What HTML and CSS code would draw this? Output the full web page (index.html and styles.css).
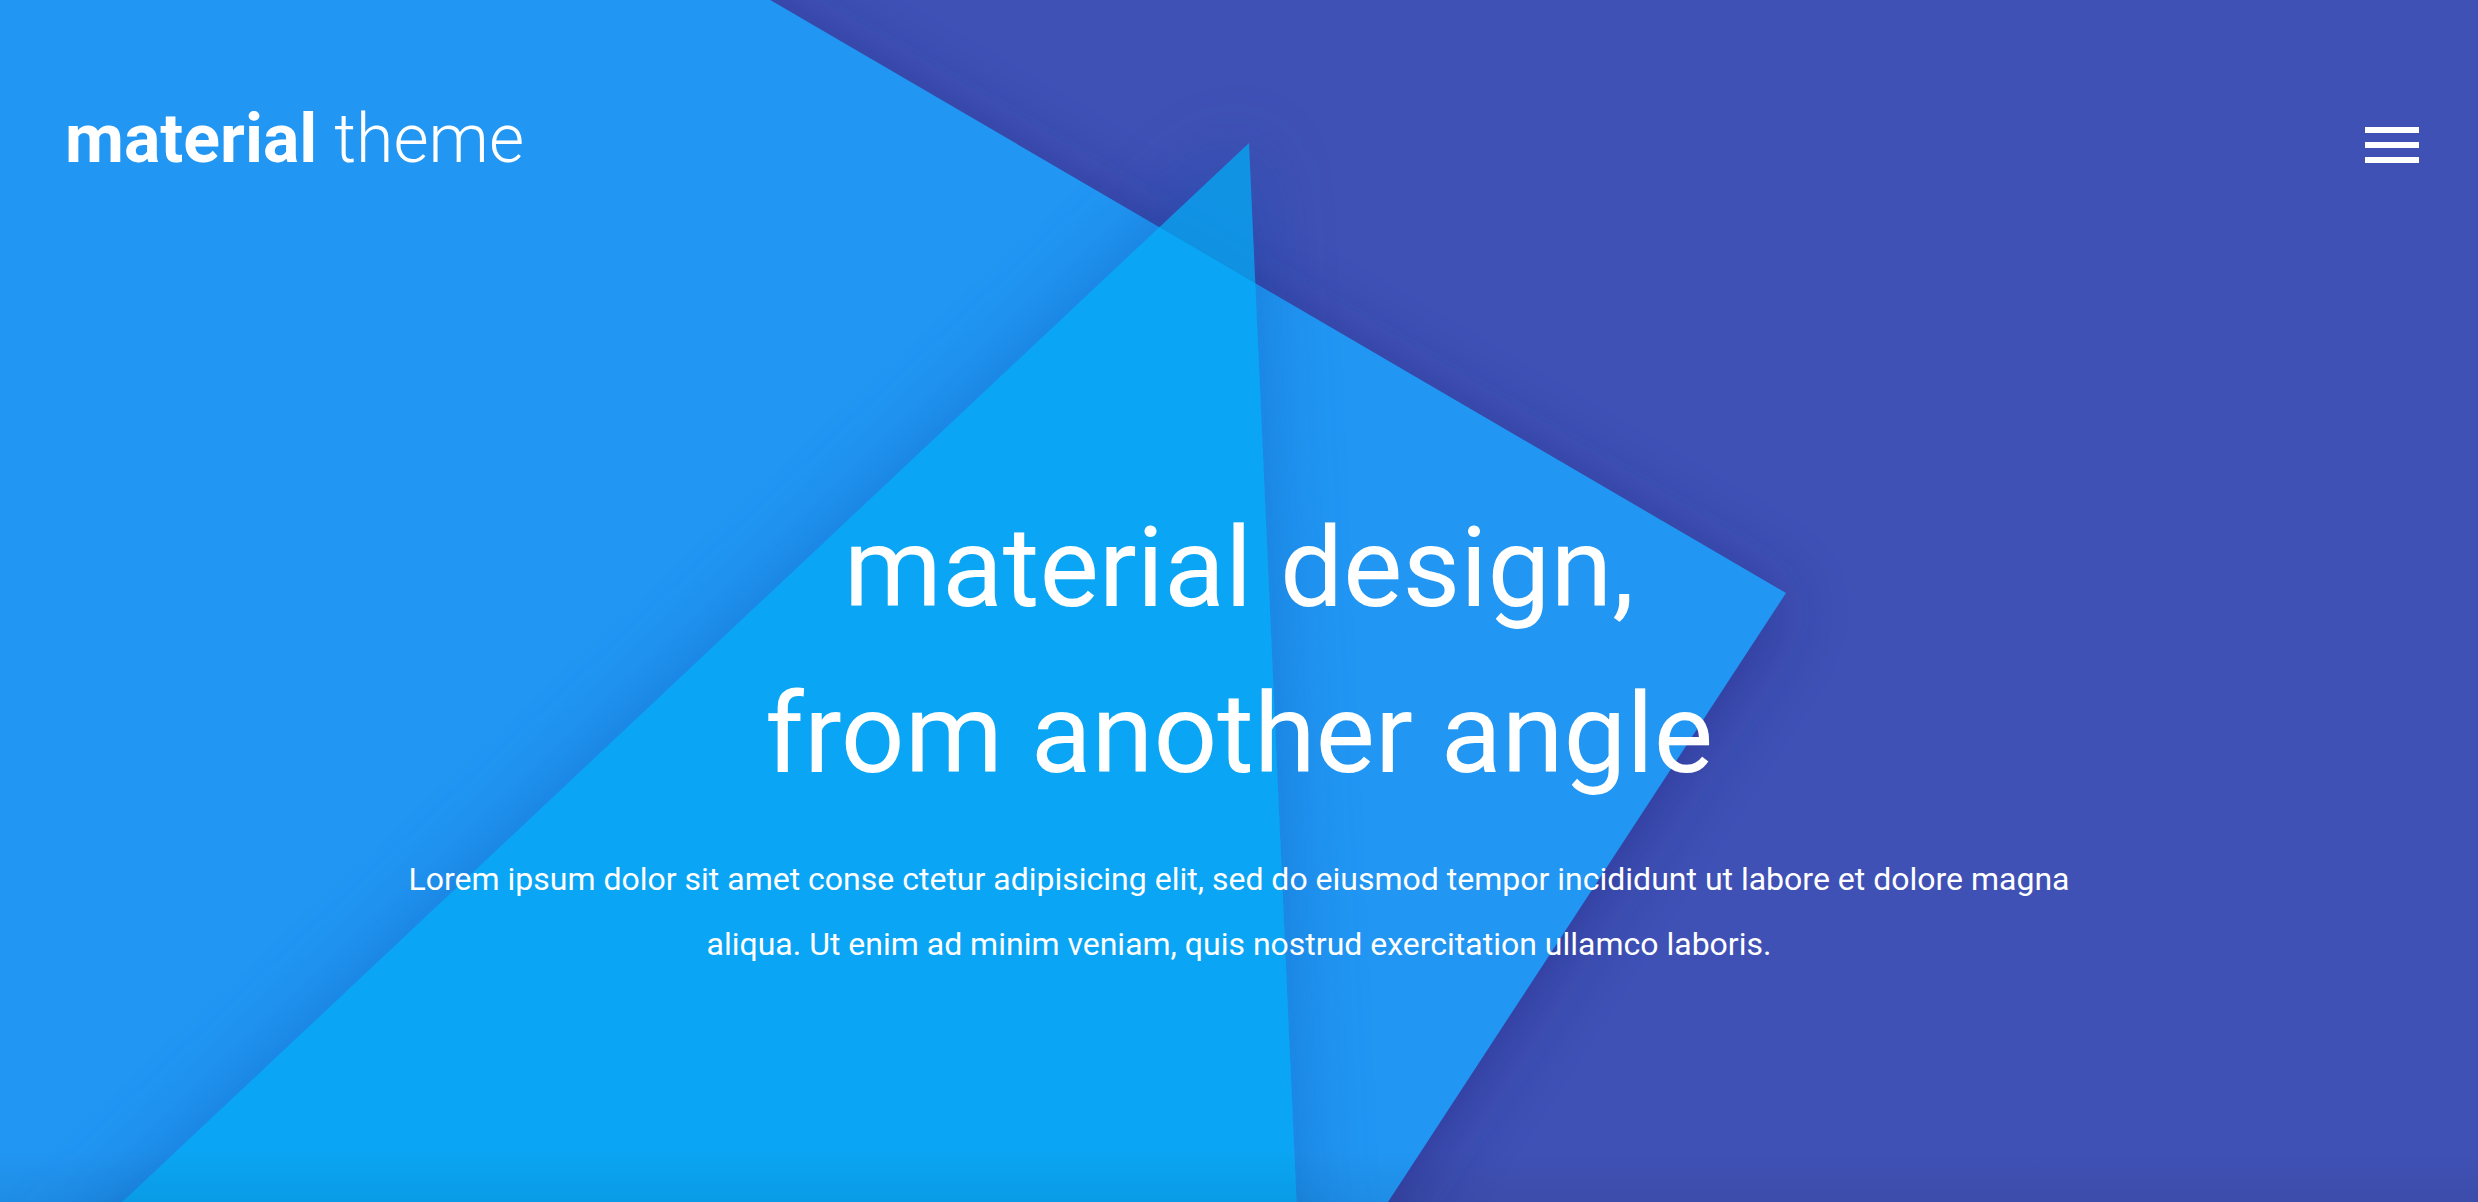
FILE: index.html
```html
<!DOCTYPE html>
<html lang="en">
<head>
<meta charset="utf-8">
<title>material theme</title>
<link rel="stylesheet" href="styles.css">
</head>
<body>
<section class="hero">
  <svg class="hero-bg" viewBox="0 0 2478 1202" preserveAspectRatio="none" aria-hidden="true">
    <defs>
      <filter id="shadowA" filterUnits="userSpaceOnUse" x="-400" y="-400" width="3300" height="2000">
        <feGaussianBlur stdDeviation="34"/>
      </filter>
      <filter id="shadowB" filterUnits="userSpaceOnUse" x="-400" y="-400" width="3300" height="2000">
        <feGaussianBlur stdDeviation="40"/>
      </filter>
      <mask id="outsideTri" maskUnits="userSpaceOnUse" x="-400" y="-400" width="3300" height="2000">
        <rect x="-400" y="-400" width="3300" height="2000" fill="#fff"/>
        <polygon points="1249,143 1301,1300 18,1300" fill="#000"/>
      </mask>
      <linearGradient id="bottomFade" x1="0" y1="0" x2="0" y2="1">
        <stop offset="0" stop-color="#000" stop-opacity="0"/>
        <stop offset="1" stop-color="#000" stop-opacity="0.06"/>
      </linearGradient>
    </defs>
    <polygon points="-100,-100 599,-100 1786,593 1324,1300 -100,1300" transform="translate(6,10)" fill="#1a237e" opacity="0.45" filter="url(#shadowA)"/>
    <polygon points="-100,-100 599,-100 1786,593 1324,1300 -100,1300" fill="#2196F3"/>
    <g mask="url(#outsideTri)">
      <polygon points="1249,143 1301,1300 18,1300" fill="#0d47a1" opacity="0.35" filter="url(#shadowB)"/>
    </g>
    <polygon points="1249,143 1301,1300 18,1300" fill="#03A9F4" fill-opacity="0.75"/>
    <rect x="0" y="1150" width="2478" height="52" fill="url(#bottomFade)"/>
  </svg>

  <header class="topbar">
    <a class="logo" href="#"><span class="logo-strong">material</span> <span class="logo-light">theme</span></a>
    <button class="menu-btn" type="button" aria-label="Menu">
      <span class="bar"></span>
      <span class="bar"></span>
      <span class="bar"></span>
    </button>
  </header>

  <div class="hero-content">
    <h1 class="hero-title">material design,<br>from another angle</h1>
    <p class="hero-text">Lorem ipsum dolor sit amet conse ctetur adipisicing elit, sed do eiusmod tempor incididunt ut labore et dolore magna aliqua. Ut enim ad minim veniam, quis nostrud exercitation ullamco laboris.</p>
  </div>
</section>
</body>
</html>
```

FILE: styles.css
```css
html, body {
  margin: 0;
  padding: 0;
}

body {
  font-family: Roboto, "Noto Sans", "Liberation Sans", sans-serif;
  color: #fff;
  background: #3F51B5;
  overflow: hidden;
}

.hero {
  position: relative;
  width: 100%;
  height: 1202px;
  background: #3F51B5;
  overflow: hidden;
  display: flex;
  flex-direction: column;
}

.hero-bg {
  position: absolute;
  left: 0;
  top: 0;
  width: 100%;
  height: 100%;
  z-index: 0;
}

.topbar {
  position: relative;
  z-index: 1;
  display: flex;
  justify-content: space-between;
  align-items: flex-start;
  padding: 105px 59px 0 65px;
}

.logo {
  color: #fff;
  text-decoration: none;
  font-size: 68px;
  line-height: 68px;
  white-space: nowrap;
}

.logo-strong {
  font-weight: 700;
}

.logo-light {
  font-weight: 300;
}

.menu-btn {
  margin-top: 22px;
  padding: 0;
  border: 0;
  background: transparent;
  display: flex;
  flex-direction: column;
  gap: 9px;
  cursor: pointer;
}

.bar {
  display: block;
  width: 54px;
  height: 6px;
  background: #fff;
}

.hero-content {
  position: relative;
  z-index: 1;
  display: flex;
  flex-direction: column;
  align-items: center;
  padding-top: 312px;
  text-align: center;
}

.hero-title {
  margin: 0;
  font-size: 112px;
  line-height: 166px;
  font-weight: 400;
}

.hero-text {
  margin: 30px 0 0;
  max-width: 1700px;
  font-size: 32px;
  line-height: 65px;
  font-weight: 400;
}
```
